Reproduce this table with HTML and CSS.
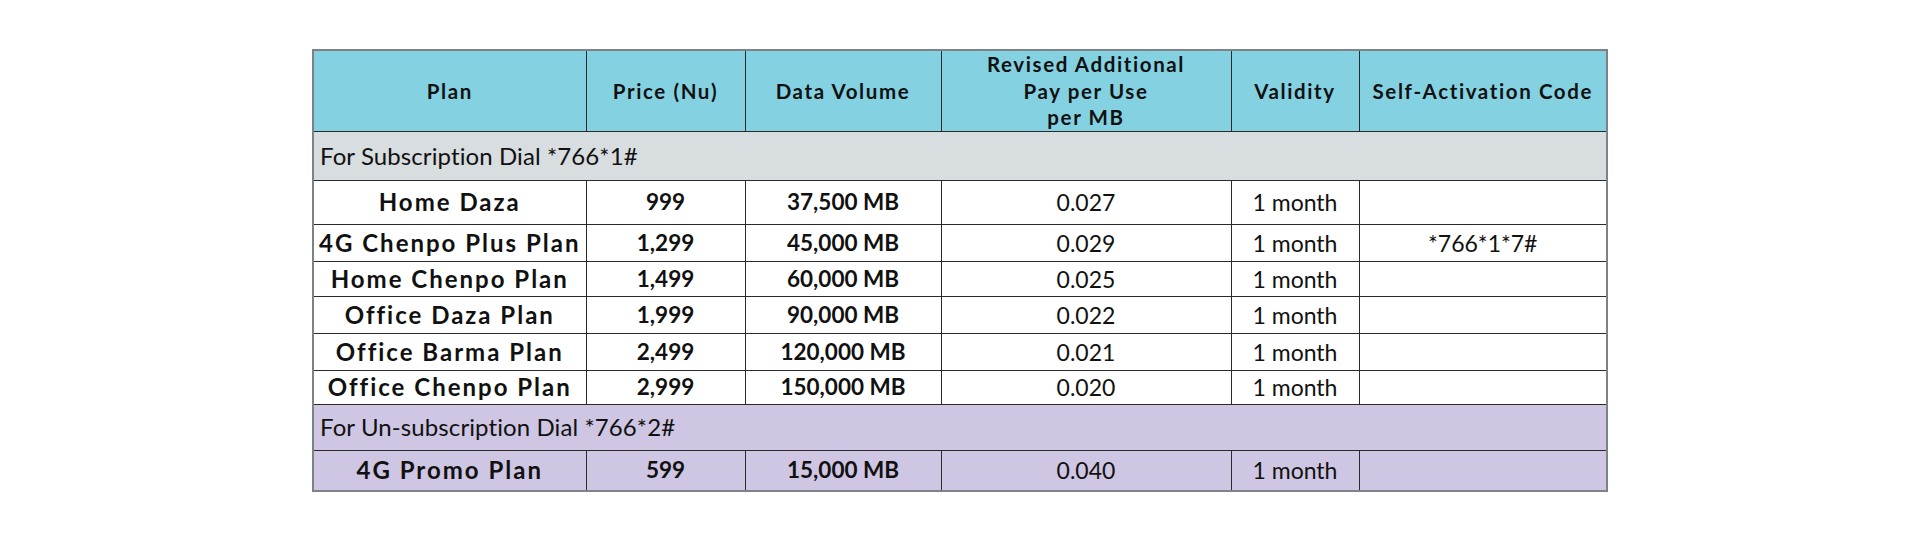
FILE: index.html
```html
<!DOCTYPE html>
<html lang="en">
<head>
<meta charset="utf-8">
<title>Data Plans</title>
<link rel="stylesheet" href="styles.css">
</head>
<body>
<main class="page">
  <table class="plans">
    <colgroup>
      <col class="c-plan">
      <col class="c-price">
      <col class="c-data">
      <col class="c-ppu">
      <col class="c-valid">
      <col class="c-code">
    </colgroup>
    <thead>
      <tr class="head">
        <th>Plan</th>
        <th>Price (Nu)</th>
        <th>Data Volume</th>
        <th>Revised Additional<br>Pay per Use<br>per MB</th>
        <th>Validity</th>
        <th>Self-Activation Code</th>
      </tr>
    </thead>
    <tbody>
      <tr class="section sub"><td colspan="6">For Subscription Dial *766*1#</td></tr>
      <tr class="r44"><td class="name">Home Daza</td><td class="b">999</td><td class="b">37,500 MB</td><td>0.027</td><td>1 month</td><td></td></tr>
      <tr class="r37"><td class="name">4G Chenpo Plus Plan</td><td class="b">1,299</td><td class="b">45,000 MB</td><td>0.029</td><td>1 month</td><td>*766*1*7#</td></tr>
      <tr class="r35"><td class="name">Home Chenpo Plan</td><td class="b">1,499</td><td class="b">60,000 MB</td><td>0.025</td><td>1 month</td><td></td></tr>
      <tr class="r37"><td class="name">Office Daza Plan</td><td class="b">1,999</td><td class="b">90,000 MB</td><td>0.022</td><td>1 month</td><td></td></tr>
      <tr class="r37"><td class="name">Office Barma Plan</td><td class="b">2,499</td><td class="b">120,000 MB</td><td>0.021</td><td>1 month</td><td></td></tr>
      <tr class="r34"><td class="name">Office Chenpo Plan</td><td class="b">2,999</td><td class="b">150,000 MB</td><td>0.020</td><td>1 month</td><td></td></tr>
      <tr class="section unsub"><td colspan="6">For Un-subscription Dial *766*2#</td></tr>
      <tr class="r40 promo"><td class="name">4G Promo Plan</td><td class="b">599</td><td class="b">15,000 MB</td><td>0.040</td><td>1 month</td><td></td></tr>
    </tbody>
  </table>
</main>
</body>
</html>
```

FILE: styles.css
```css
html, body {
  margin: 0;
  padding: 0;
  background: #ffffff;
}

.page {
  display: flex;
  justify-content: center;
  padding-top: 49px;
}

.plans {
  width: 1294px;
  table-layout: fixed;
  border-collapse: collapse;
  border: 2px solid #7b8387;
  font-family: Lato, "Open Sans", sans-serif;
  color: #111;
}

.c-plan { width: 273px; }
.c-price { width: 159px; }
.c-data { width: 196px; }
.c-ppu { width: 290px; }
.c-valid { width: 128px; }
.c-code { width: 248px; }

.plans th,
.plans td {
  border: 1px solid #2a2a2a;
  text-align: center;
  vertical-align: middle;
  padding: 0;
  white-space: nowrap;
}

.head {
  height: 81px;
  background: #84d1e2;
}

.head th {
  font-size: 20.5px;
  font-weight: 700;
  line-height: 26.5px;
  letter-spacing: 1.6px;
}

.plans td {
  font-size: 23px;
  font-weight: 400;
  line-height: 26px;
}

.plans td.name {
  font-size: 24px;
  font-weight: 700;
  letter-spacing: 2px;
}

.plans td.b {
  font-size: 22.5px;
  font-weight: 700;
}

.section td {
  text-align: left;
  padding-left: 6px;
}

.plans .section td {
  font-size: 24px;
  letter-spacing: 0.1px;
}

.sub {
  height: 49px;
  background: #d8dde0;
}

.unsub {
  height: 46px;
  background: #cec6e3;
}

.promo {
  background: #cec6e3;
}

.r44 { height: 44px; }
.r40 { height: 41px; }
.r37 { height: 37px; }
.r35 { height: 35px; }
.r34 { height: 34px; }
```
